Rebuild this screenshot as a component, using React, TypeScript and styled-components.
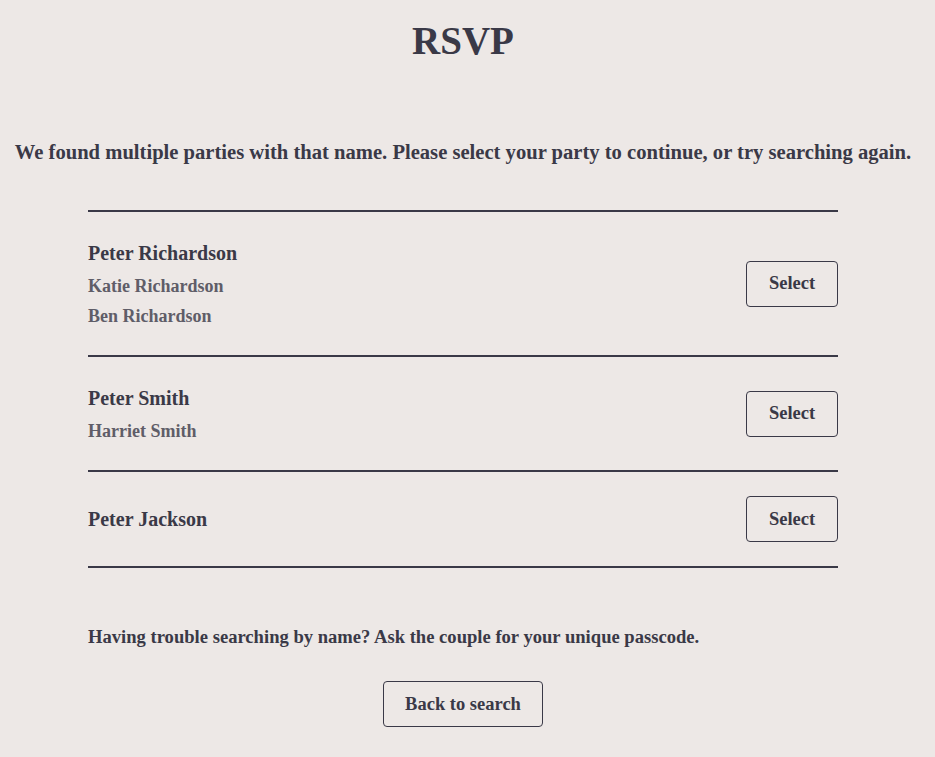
import styled, { createGlobalStyle } from "styled-components";

const GlobalStyle = createGlobalStyle`
  html, body {
    margin: 0;
    background-color: #ede8e6;
  }
  body {
    font-family: "Liberation Serif", "DejaVu Serif", serif;
    color: #3a3947;
  }
`;

const Page = styled.main`
  display: flex;
  flex-direction: column;
  align-items: center;
  padding: 17px 9px 32px 0;
  min-height: 757px;
  box-sizing: border-box;
`;

const Title = styled.h1`
  margin: 0;
  font-size: 39px;
  line-height: 48px;
  font-weight: 700;
  color: #3a3947;
`;

const Intro = styled.p`
  margin: 73px 0 0;
  font-size: 20.6px;
  line-height: 28px;
  font-weight: 700;
  text-align: center;
`;

const PartyList = styled.ul`
  list-style: none;
  margin: 44px 0 0;
  padding: 0;
  width: 750px;
  border-top: 2px solid #3a3947;
`;

const PartyRow = styled.li`
  display: flex;
  align-items: center;
  justify-content: space-between;
  padding: 24px 0;
  border-bottom: 2px solid #3a3947;
`;

const Names = styled.div`
  display: flex;
  flex-direction: column;
`;

const Lead = styled.span`
  font-size: 20px;
  line-height: 35px;
  font-weight: 700;
  color: #3a3947;
`;

const Guest = styled.span`
  font-size: 18px;
  line-height: 30px;
  font-weight: 700;
  color: #5f5d68;
`;

const OutlineButton = styled.button<{ $wide?: boolean }>`
  font-family: inherit;
  font-size: 18.5px;
  font-weight: 700;
  color: #3a3947;
  background: transparent;
  border: 1px solid #3a3947;
  border-radius: 4px;
  width: ${(p) => (p.$wide ? "160px" : "92px")};
  height: 46px;
  padding: 0;
  cursor: pointer;
`;

const Help = styled.p`
  width: 750px;
  margin: 57px 0 0;
  font-size: 18.6px;
  line-height: 24px;
  font-weight: 700;
`;

const Footer = styled.div`
  margin-top: 32px;
`;

const parties = [
  { lead: "Peter Richardson", guests: ["Katie Richardson", "Ben Richardson"] },
  { lead: "Peter Smith", guests: ["Harriet Smith"] },
  { lead: "Peter Jackson", guests: [] as string[] },
];

export default function App() {
  return (
    <>
      <GlobalStyle />
      <Page>
        <Title>RSVP</Title>
        <Intro>
          We found multiple parties with that name. Please select your party to continue, or try
          searching again.
        </Intro>
        <PartyList>
          {parties.map((party) => (
            <PartyRow key={party.lead}>
              <Names>
                <Lead>{party.lead}</Lead>
                {party.guests.map((g) => (
                  <Guest key={g}>{g}</Guest>
                ))}
              </Names>
              <OutlineButton>Select</OutlineButton>
            </PartyRow>
          ))}
        </PartyList>
        <Help>Having trouble searching by name? Ask the couple for your unique passcode.</Help>
        <Footer>
          <OutlineButton $wide>Back to search</OutlineButton>
        </Footer>
      </Page>
    </>
  );
}
